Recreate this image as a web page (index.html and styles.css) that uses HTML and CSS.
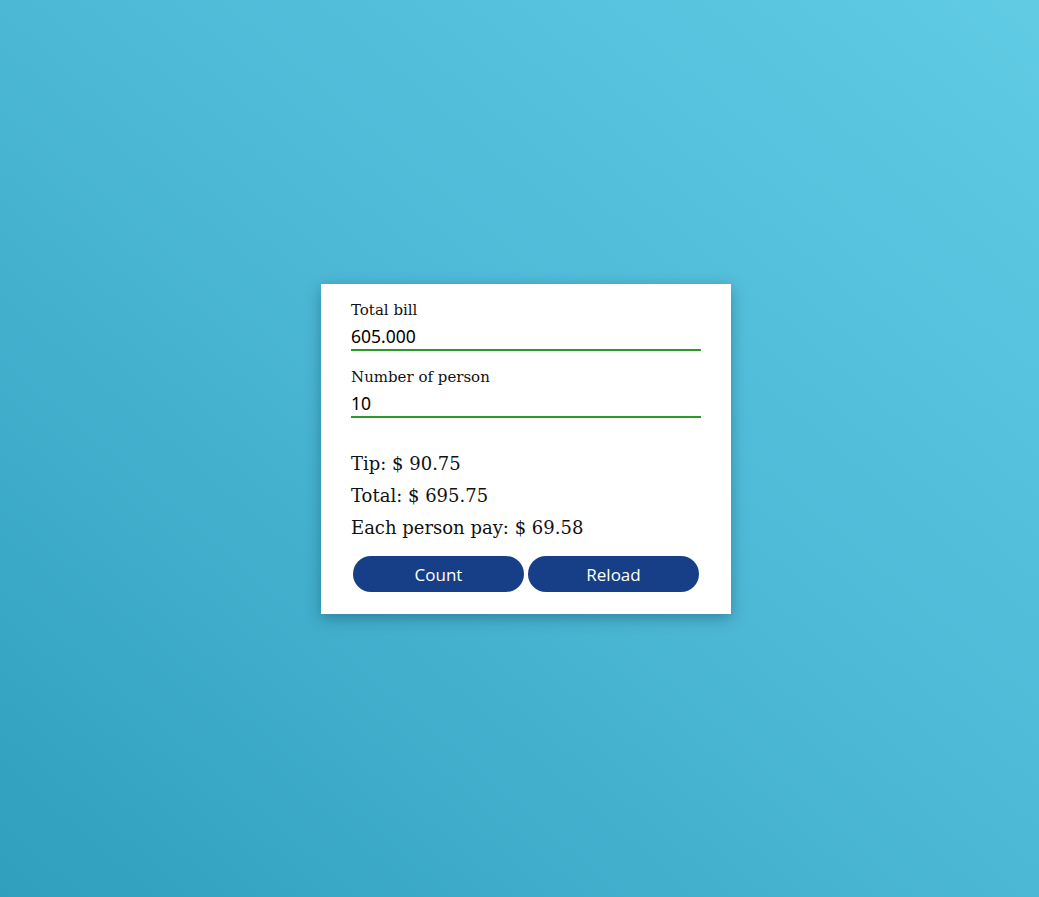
FILE: index.html
```html
<!DOCTYPE html>
<html>
<head>
<meta charset="utf-8">
<link rel="stylesheet" href="styles.css">
</head>
<body>
<main class="page">
  <section class="card">
    <label class="field">
      <span class="label">Total bill</span>
      <input class="input" type="text" value="605.000">
    </label>
    <label class="field">
      <span class="label">Number of person</span>
      <input class="input" type="text" value="10">
    </label>
    <div class="results">
      <p class="line">Tip: $ 90.75</p>
      <p class="line">Total: $ 695.75</p>
      <p class="line">Each person pay: $ 69.58</p>
    </div>
    <div class="actions">
      <button class="btn">Count</button>
      <button class="btn">Reload</button>
    </div>
  </section>
</main>
</body>
</html>
```

FILE: styles.css
```css
html, body {
  margin: 0;
  height: 100%;
}
body {
  background: linear-gradient(to top right, #2f9fbd 0%, #4cb8d6 50%, #60cbe3 100%);
  font-family: "DejaVu Serif", serif;
}
.page {
  height: 100%;
  display: flex;
  align-items: center;
  justify-content: center;
  padding: 1px 0 0 13px;
  box-sizing: border-box;
}
.card {
  width: 410px;
  box-sizing: border-box;
  background: #fff;
  padding: 17px 30px 22px;
  box-shadow: 0 4px 14px rgba(0, 40, 60, 0.35);
  display: flex;
  flex-direction: column;
}
.field {
  display: flex;
  flex-direction: column;
  margin-bottom: 17px;
}
.label {
  font-size: 15px;
  color: #111;
  line-height: 18px;
}
.input {
  margin-top: 2px;
  height: 30px;
  box-sizing: border-box;
  border: none;
  border-bottom: 2px solid #2a9a2a;
  padding: 2px 0 0;
  font-family: "Noto Sans", sans-serif;
  font-size: 17.5px;
  color: #000;
  outline: none;
  background: transparent;
}
.results {
  margin-top: 18px;
  display: flex;
  flex-direction: column;
  gap: 10px;
}
.line {
  margin: 0;
  font-size: 18px;
  line-height: 22px;
  color: #111;
}
.actions {
  margin-top: 17px;
  display: flex;
  gap: 4px;
  padding: 0 2px;
}
.btn {
  flex: 1;
  height: 36px;
  border: none;
  border-radius: 18px;
  background: #173f88;
  color: #fff;
  font-family: "Open Sans", sans-serif;
  font-size: 17px;
  cursor: pointer;
}
```
